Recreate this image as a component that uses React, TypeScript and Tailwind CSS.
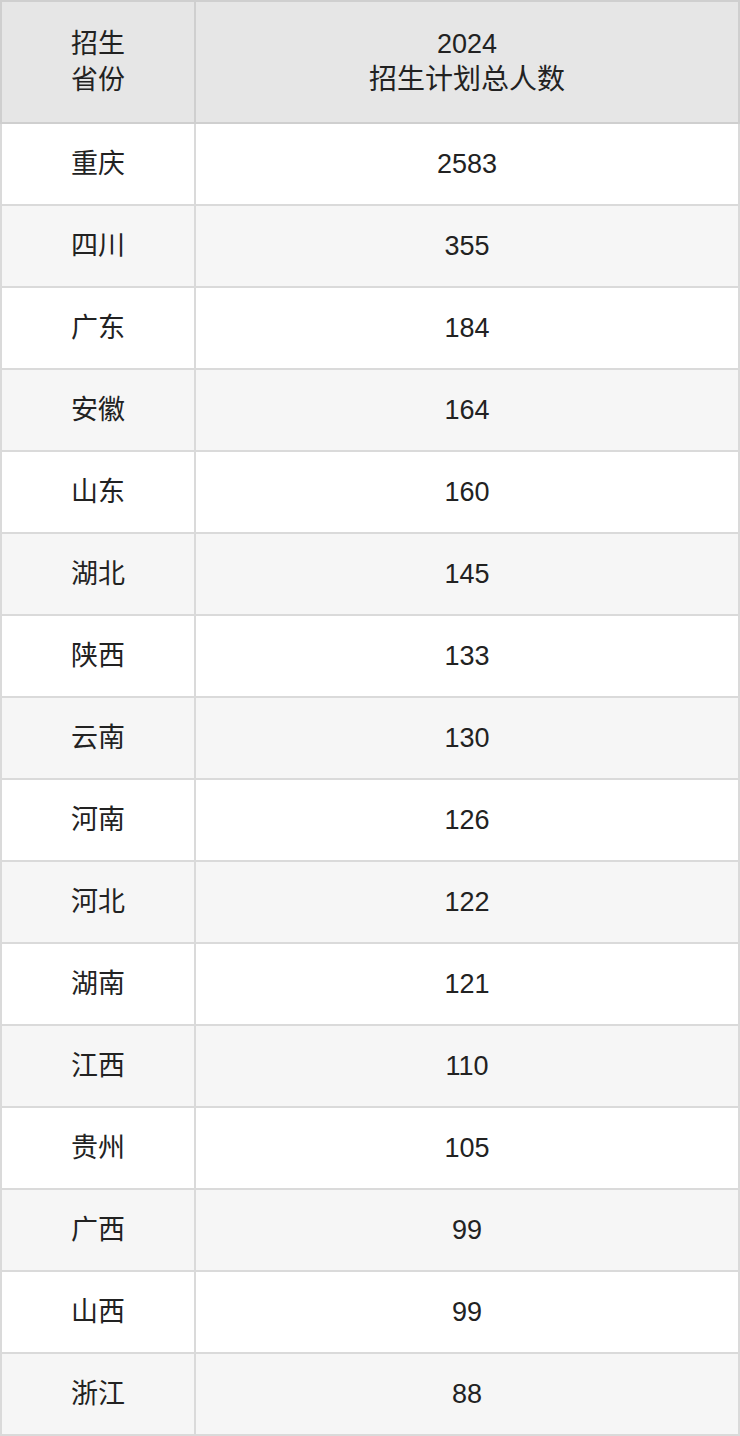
const rows: [string, string][] = [
  ["重庆", "2583"],
  ["四川", "355"],
  ["广东", "184"],
  ["安徽", "164"],
  ["山东", "160"],
  ["湖北", "145"],
  ["陕西", "133"],
  ["云南", "130"],
  ["河南", "126"],
  ["河北", "122"],
  ["湖南", "121"],
  ["江西", "110"],
  ["贵州", "105"],
  ["广西", "99"],
  ["山西", "99"],
  ["浙江", "88"],
];

const font = { fontFamily: '"Liberation Sans", "Noto Sans CJK SC", sans-serif' };

export default function App() {
  return (
    <div className="w-[740px] bg-white" style={font}>
      <table className="w-full border-collapse text-[27px] text-[#222] table-fixed">
        <colgroup>
          <col className="w-[194px]" />
          <col />
        </colgroup>
        <thead>
          <tr className="h-[122px] bg-[#e6e6e6]">
            <th className="border-2 border-[#cfcfcf] font-normal leading-[36px] text-center">
              招生
              <br />
              省份
            </th>
            <th className="border-2 border-[#cfcfcf] font-normal leading-[36px] text-center">
              2024
              <br />
              <span className="text-[28px]">招生计划总人数</span>
            </th>
          </tr>
        </thead>
        <tbody>
          {rows.map(([prov, num], i) => (
            <tr key={i} className={`h-[82px] ${i % 2 === 1 ? "bg-[#f6f6f6]" : "bg-white"}`}>
              <td className="border-2 border-[#dadada] text-center">{prov}</td>
              <td className="border-2 border-[#dadada] text-center">{num}</td>
            </tr>
          ))}
        </tbody>
      </table>
    </div>
  );
}
